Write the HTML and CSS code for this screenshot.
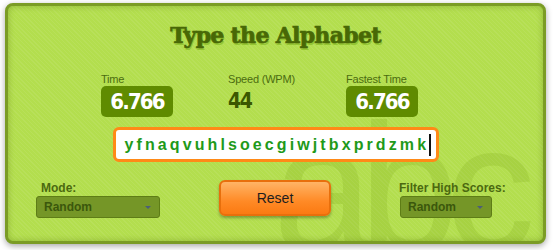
FILE: index.html
```html
<!DOCTYPE html>
<html lang="en">
<head>
<meta charset="utf-8">
<title>Type the Alphabet</title>
<link rel="stylesheet" href="styles.css">
</head>
<body>
<main class="card">
  <div class="watermark" aria-hidden="true">abc</div>
  <h1 class="title">Type the Alphabet</h1>
  <section class="stats">
    <div class="stat">
      <div class="stat-label">Time</div>
      <div class="stat-box">6.766</div>
    </div>
    <div class="stat">
      <div class="stat-label">Speed (WPM)</div>
      <div class="stat-plain">44</div>
    </div>
    <div class="stat">
      <div class="stat-label">Fastest Time</div>
      <div class="stat-box">6.766</div>
    </div>
  </section>
  <div class="entry">
    <span class="entry-text">yfnaqvuhlsoecgiwjtbxprdzmk</span><span class="caret"></span>
  </div>
  <section class="controls">
    <div class="field field-mode">
      <div class="field-label">Mode:</div>
      <div class="select select-mode"><span>Random</span><span class="arrow"></span></div>
    </div>
    <button class="reset" type="button">Reset</button>
    <div class="field field-filter">
      <div class="field-label">Filter High Scores:</div>
      <div class="select select-filter"><span>Random</span><span class="arrow"></span></div>
    </div>
  </section>
</main>
</body>
</html>
```
FILE: styles.css
```css
html, body {
  margin: 0;
  padding: 0;
  background: #ffffff;
}

body {
  width: 557px;
  height: 250px;
  overflow: hidden;
  font-family: "Liberation Sans", Arial, sans-serif;
}

.card {
  position: relative;
  box-sizing: border-box;
  margin: 3px 0 0 5px;
  width: 541px;
  height: 241px;
  border: 3px solid #7b9c25;
  border-radius: 8px;
  overflow: hidden;
  background-color: #b3de4e;
  background-image: repeating-linear-gradient(45deg,
      rgba(255, 255, 255, 0.07) 0px, rgba(255, 255, 255, 0.07) 1px,
      rgba(0, 0, 0, 0) 1px, rgba(0, 0, 0, 0) 3px);
  box-shadow: 0 2px 6px rgba(0, 0, 0, 0.35), inset 0 0 6px rgba(70, 100, 0, 0.35);
}

.watermark {
  position: absolute;
  left: 265px;
  top: 92px;
  font-family: "Liberation Sans", Arial, sans-serif;
  font-size: 180px;
  line-height: 180px;
  letter-spacing: -14px;
  color: rgba(120, 165, 20, 0.2);
  pointer-events: none;
  z-index: 0;
}

.title {
  position: relative;
  margin: 16px 0 0;
  text-align: center;
  font-family: "DejaVu Serif", serif;
  font-weight: bold;
  font-size: 22px;
  line-height: 26px;
  letter-spacing: -0.7px;
  color: #486806;
  -webkit-text-stroke: 0.7px #486806;
  text-shadow: 1px 2px 0 #93c532;
}

.stats {
  position: relative;
  display: grid;
  grid-template-columns: 127px 118px 72px;
  margin: 25px 0 0 93px;
}

.stat-label {
  font-size: 11px;
  line-height: 13px;
  color: #4b6c10;
  letter-spacing: -0.2px;
  white-space: nowrap;
}

.stat-box {
  box-sizing: border-box;
  width: 72px;
  height: 31px;
  border-radius: 5px;
  background: #5f8b00;
  color: #ffffff;
  text-align: center;
  font-family: "DejaVu Sans Condensed", "DejaVu Sans", sans-serif;
  font-stretch: condensed;
  font-weight: bold;
  font-size: 22px;
  line-height: 31px;
  letter-spacing: -1.8px;
}

.stat-plain {
  height: 31px;
  color: #3b5800;
  font-family: "DejaVu Sans Condensed", "DejaVu Sans", sans-serif;
  font-stretch: condensed;
  font-weight: bold;
  font-size: 21px;
  line-height: 31px;
  letter-spacing: -1.5px;
}

.entry {
  position: relative;
  box-sizing: border-box;
  display: flex;
  align-items: center;
  width: 326px;
  height: 35px;
  margin: 10px auto 0;
  padding-left: 9px;
  background: #ffffff;
  border: 3px solid #ff8a17;
  border-radius: 6px;
  z-index: 1;
}

.entry-text {
  font-family: "Liberation Sans", Arial, sans-serif;
  font-weight: bold;
  font-size: 16px;
  line-height: 20px;
  letter-spacing: 3.1px;
  color: #1f9a1a;
}

.caret {
  display: inline-block;
  width: 2px;
  height: 22px;
  background: #111111;
}

.controls {
  position: relative;
  display: flex;
  align-items: flex-end;
  margin: 18px 0 0 28px;
  z-index: 1;
}

.field-label {
  font-size: 12px;
  line-height: 13px;
  font-weight: bold;
  color: #4b6910;
  margin-bottom: 1px;
  padding-left: 5px;
  white-space: nowrap;
}

.field-filter .field-label {
  padding-left: 0;
}

.select {
  box-sizing: border-box;
  display: flex;
  align-items: center;
  justify-content: space-between;
  height: 22px;
  padding: 0 8px 0 7px;
  background: #759627;
  border: 1px solid #5e7d16;
  border-radius: 3px;
  font-size: 12px;
  line-height: 14px;
  font-weight: bold;
  color: #3b570c;
}

.select-mode {
  width: 124px;
}

.select-filter {
  width: 92px;
  margin-left: 1px;
}

.arrow {
  width: 0;
  height: 0;
  border-left: 3px solid transparent;
  border-right: 3px solid transparent;
  border-top: 3px solid #4c5e78;
}

.reset {
  box-sizing: border-box;
  width: 112px;
  height: 36px;
  margin: 0 0 2px 59px;
  border: 2px solid #e86f0c;
  border-radius: 6px;
  background: linear-gradient(#ffb466, #ff8a26 60%, #fb7a12);
  box-shadow: 0 2px 3px rgba(0, 0, 0, 0.3);
  font-family: "Liberation Sans", Arial, sans-serif;
  font-size: 14px;
  color: #1e1e1e;
  padding: 0;
}

.field-filter {
  width: 100px;
  margin-left: 68px;
}
```
